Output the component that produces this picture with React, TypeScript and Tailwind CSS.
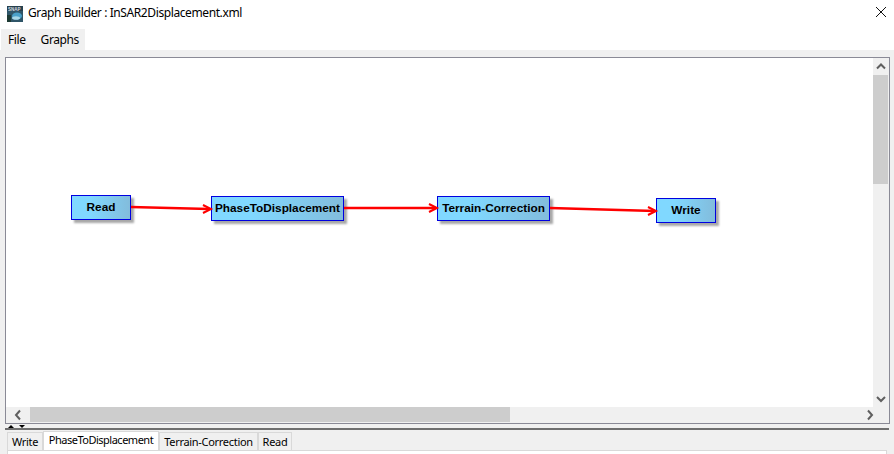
const ui = { fontFamily: '"Noto Sans", "Open Sans", sans-serif' };

function Node({ label, x, y, w, h }: { label: string; x: number; y: number; w: number; h: number }) {
  return (
    <div
      className="absolute flex items-center justify-center border border-[#0000e0] bg-gradient-to-r from-[#80d8ff] from-30% to-[#82bcdc] shadow-[3px_3px_2px_#a8a8a8] text-[11.8px] leading-[14px] font-bold text-black whitespace-nowrap pb-[2px]"
      style={{ left: x, top: y, width: w, height: h, fontFamily: '"Liberation Sans", sans-serif' }}
    >
      {label}
    </div>
  );
}

function Arrow({ d, head }: { d: string; head: string }) {
  return (
    <g fill="none" stroke="#ff0000" strokeWidth="2.4">
      <path d={d} />
      <path d={head} strokeWidth="2" />
    </g>
  );
}

function Chev({ dir }: { dir: "up" | "down" | "left" | "right" }) {
  const d = {
    up: "M2 7.5 L6 3.5 L10 7.5",
    down: "M2 4 L6 8 L10 4",
    left: "M8 1.5 L4 6 L8 10.5",
    right: "M4 1.5 L8 6 L4 10.5",
  }[dir];
  return (
    <svg width="12" height="12" viewBox="0 0 12 12" fill="none" stroke="#5f5f5f" strokeWidth="2">
      <path d={d} />
    </svg>
  );
}

function Tab({ label, w, active }: { label: string; w: string; active?: boolean }) {
  return active ? (
    <div className={`${w} h-[20px] -mt-[1px] flex justify-center bg-white border border-b-0 border-[#d9d9d9] text-[11px] leading-[16px] tracking-[-0.5px] text-black`}>{label}</div>
  ) : (
    <div className={`${w} h-[18px] flex justify-center pt-[1px] border border-b-0 border-[#d9d9d9] text-[11px] leading-[16px] tracking-[-0.3px] text-black`}>{label}</div>
  );
}

export default function App() {
  return (
    <div className="w-[894px] h-[454px] flex flex-col bg-white overflow-hidden" style={ui}>
      <div className="h-[29px] flex items-center pl-[7px] pr-[7px] shrink-0">
        <svg width="16" height="16" viewBox="0 0 16 16" className="mr-[5px] -mt-[2px]">
          <rect width="16" height="16" fill="#27404d" />
          <rect y="5" width="16" height="11" fill="#2f5568" />
          <ellipse cx="10" cy="10" rx="5" ry="3.5" fill="#4aa0c8" />
          <ellipse cx="9" cy="12" rx="4" ry="1.8" fill="#a8d8e8" />
          <rect x="0" y="9" width="4" height="7" fill="#1d3a34" />
          <text x="1" y="4.5" fontSize="4.5" fontWeight="700" fill="#d8dee2" fontFamily="Liberation Sans">SNAP</text>
        </svg>
        <span className="text-[12px] text-black -mt-[3px] tracking-[-0.4px]">Graph Builder : InSAR2Displacement.xml</span>
        <svg width="12" height="12" viewBox="0 0 12 12" className="ml-auto -mt-[6px]" stroke="#111" strokeWidth="1">
          <path d="M1 1 L11 11 M11 1 L1 11" />
        </svg>
      </div>
      <div className="h-[21px] flex shrink-0">
        <div className="ml-[1px] w-[84px] h-full flex items-center bg-[#f0f0f0] text-[12px] tracking-[-0.4px] text-black">
          <span className="ml-[7px]">File</span>
          <span className="ml-[15px]">Graphs</span>
        </div>
      </div>
      <div className="flex-1 flex flex-col bg-[#f0f0f0]">
        <div className="mt-[7px] ml-[5px] mr-[4px] h-[367px] border border-[#8a8a96] flex flex-col">
          <div className="flex-1 flex min-h-0">
            <div className="relative flex-1 bg-white">
              <Node label="Read" x={65} y={137} w={60} h={25} />
              <Node label="PhaseToDisplacement" x={205} y={138} w={133} h={25} />
              <Node label="Terrain-Correction" x={431} y={138} w={113} h={25} />
              <Node label="Write" x={650} y={140} w={60} h={25} />
              <svg className="absolute left-0 top-0" width="867" height="349" viewBox="6 58 867 349">
                <Arrow d="M131 207 L209 209" head="M203 205 L211 209 L203 213" />
                <Arrow d="M344 208 L436 208" head="M429 204 L437 208 L429 212" />
                <Arrow d="M550 208 L655 211" head="M648 207 L656 211 L648 215" />
              </svg>
            </div>
            <div className="w-[15px] mr-px flex flex-col bg-[#f0f0f0]">
              <div className="h-[17px] flex items-center justify-center"><Chev dir="up" /></div>
              <div className="h-[109px] bg-[#cdcdcd]" />
              <div className="flex-1" />
              <div className="h-[17px] flex items-center justify-center"><Chev dir="down" /></div>
            </div>
          </div>
          <div className="h-[15px] mb-px flex items-center shrink-0">
            <div className="w-[24px] flex justify-center"><Chev dir="left" /></div>
            <div className="w-[480px] h-full bg-[#cdcdcd]" />
            <div className="flex-1" />
            <div className="w-[24px] mr-[7px] flex justify-center"><Chev dir="right" /></div>
          </div>
        </div>
        <div className="mt-[4px] mx-[5px] h-[2px] bg-[#6f6f6f] relative">
          <div className="absolute left-[3px] -top-[3px] w-0 h-0 border-x-[3px] border-x-transparent border-b-[3px] border-b-black" />
          <div className="absolute left-[14px] -top-[3px] w-0 h-0 border-x-[3px] border-x-transparent border-t-[3px] border-t-black" />
        </div>
        <div className="mt-[2px] ml-[7px] mr-[7px] flex items-start h-[18px]">
          <Tab label="Write" w="w-[36px]" />
          <Tab label="PhaseToDisplacement" w="w-[116px]" active />
          <Tab label="Terrain-Correction" w="w-[99px]" />
          <Tab label="Read" w="w-[34px]" />
        </div>
        <div className="ml-[7px] mr-[7px] flex-1 bg-white border-x border-t border-[#d9d9d9]" />
      </div>
    </div>
  );
}
